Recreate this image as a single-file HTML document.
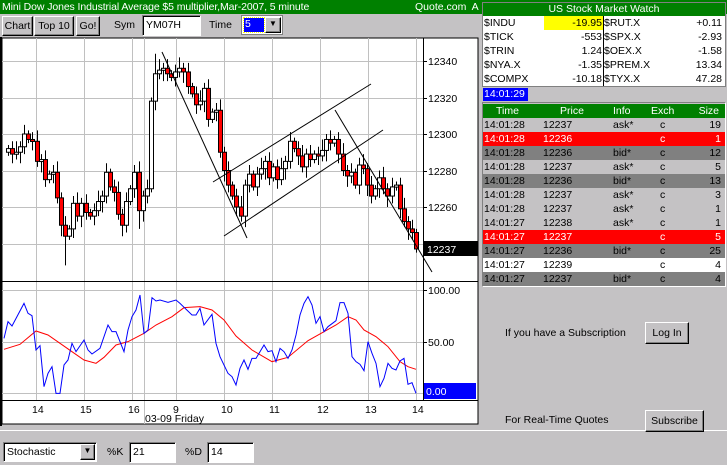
<!DOCTYPE html>
<html><head><meta charset="utf-8"><style>
*{margin:0;padding:0;box-sizing:border-box}
body{width:727px;height:465px;background:#c4c2c4;font-family:"Liberation Sans",sans-serif;font-size:10.5px;position:relative;overflow:hidden}
.a{position:absolute;white-space:nowrap}
.btn{position:absolute;background:#c4c2c4;border:1px solid;border-color:#fff #000 #000 #fff;box-shadow:inset -1px -1px #808080;text-align:center;font-size:10.5px;line-height:18px}
.inp{position:absolute;background:#fff;border:1px solid;border-color:#808080 #fff #fff #808080;box-shadow:inset 1px 1px #000;padding-left:3px;font-size:10.5px;line-height:18px}
.row{position:absolute;left:483px;width:242px;height:14px;line-height:14px;font-size:10.5px}
.row span{position:absolute}
</style></head><body>
<div class="a" style="left:0;top:0;width:727px;height:14px;background:#008000"></div>
<div class="a" style="left:2px;top:0;color:#fff;font-size:10.5px;line-height:14px;letter-spacing:-0.1px">Mini Dow Jones Industrial Average $5 multiplier,Mar-2007, 5 minute</div>
<div class="a" style="left:415px;top:0;color:#fff;font-size:10.5px;line-height:14px">Quote.com&nbsp; A</div>

<div class="btn" style="left:2px;top:16px;width:31px;height:20px">Chart</div>
<div class="btn" style="left:34px;top:16px;width:40px;height:20px">Top 10</div>
<div class="btn" style="left:76px;top:16px;width:24px;height:20px">Go!</div>
<div class="a" style="left:114px;top:19px">Sym</div>
<div class="inp" style="left:142px;top:15px;width:59px;height:21px">YM07H</div>
<div class="a" style="left:209px;top:19px">Time</div>
<div class="a" style="left:241px;top:15px;width:42px;height:20px;background:#fff;border:1px solid #808080"></div>
<div class="a" style="left:244px;top:18px;width:20px;height:14px;background:#0000ff;outline:1px dotted #ff0;color:#fff;line-height:13px;padding-left:1px">5</div>
<div class="btn" style="left:265px;top:17px;width:16px;height:16px;line-height:12px;font-size:8px">▼</div>

<svg class="a" style="left:0;top:37px" width="480" height="390" viewBox="0 37 480 390">
<rect x="2" y="38" width="476" height="386" fill="#fff" stroke="#000"/>
<line x1="1" y1="37" x2="1" y2="426" stroke="#000" stroke-width="2"/>
<g stroke="#c0c0c0" stroke-width="1">
<line x1="36.5" y1="38" x2="36.5" y2="400"/><line x1="84.5" y1="38" x2="84.5" y2="400"/><line x1="132.5" y1="38" x2="132.5" y2="400"/><line x1="144.5" y1="38" x2="144.5" y2="424"/><line x1="176.5" y1="38" x2="176.5" y2="400"/><line x1="224.5" y1="38" x2="224.5" y2="400"/><line x1="272.5" y1="38" x2="272.5" y2="400"/><line x1="320.5" y1="38" x2="320.5" y2="400"/><line x1="368.5" y1="38" x2="368.5" y2="400"/><line x1="416.5" y1="38" x2="416.5" y2="400"/>
<line x1="2" y1="61.5" x2="423" y2="61.5"/><line x1="2" y1="98.5" x2="423" y2="98.5"/><line x1="2" y1="134.5" x2="423" y2="134.5"/><line x1="2" y1="171.5" x2="423" y2="171.5"/><line x1="2" y1="207.5" x2="423" y2="207.5"/><line x1="2" y1="244.5" x2="423" y2="244.5"/>
<line x1="2" y1="290.5" x2="423" y2="290.5"/><line x1="2" y1="342.5" x2="423" y2="342.5"/><line x1="2" y1="393.5" x2="423" y2="393.5"/>
</g>
<line x1="423.5" y1="38" x2="423.5" y2="400" stroke="#000"/>
<line x1="2" y1="281.5" x2="478" y2="281.5" stroke="#000"/>
<line x1="2" y1="400.5" x2="478" y2="400.5" stroke="#000"/>
<g id="cd"></g>
<g stroke="#000" stroke-width="1" fill="none">
<line x1="162" y1="52" x2="247" y2="238"/>
<line x1="213" y1="182" x2="371" y2="84"/>
<line x1="224" y1="236" x2="383" y2="130"/>
<line x1="335" y1="110" x2="432" y2="272"/>
</g>
<g transform="translate(0,250) scale(0.33333)" fill="none" stroke-width="3">
<polyline stroke="#ff0000" points="12,298 60,283 108,243 144,255 180,280 216,305 252,330 288,340 312,322 348,285 384,275 432,250 468,225 516,200 552,173 600,170 636,180 672,210 708,258 756,300 816,335 864,322 924,272 972,245 1008,225 1044,200 1068,210 1092,240 1128,260 1164,290 1200,335 1224,350 1248,358"/>
<polyline stroke="#0000ff" points="12,265 24,215 36,228 72,160 84,190 96,197 108,300 120,287 132,410 144,370 156,350 168,430 180,430 192,345 204,330 216,280 228,305 252,270 264,300 276,312 300,295 324,225 336,245 348,245 372,305 384,240 396,200 408,180 420,135 432,250 444,240 456,143 468,153 480,150 504,157 528,150 540,160 576,195 588,195 600,175 612,225 636,193 648,280 660,320 684,370 696,380 708,405 720,355 732,330 744,358 756,325 768,325 792,285 804,305 816,302 828,335 840,295 852,305 864,325 876,300 888,255 900,195 912,160 924,140 936,165 948,220 960,200 972,245 984,230 1008,212 1020,158 1032,158 1044,190 1056,320 1068,335 1080,343 1092,362 1104,275 1116,310 1128,340 1140,410 1152,385 1164,340 1176,355 1188,360 1200,333 1212,325 1224,403 1236,398 1248,430"/>
</g>
<g stroke="#000"><line x1="423" y1="61.5" x2="427" y2="61.5"/><line x1="423" y1="98.5" x2="427" y2="98.5"/><line x1="423" y1="134.5" x2="427" y2="134.5"/><line x1="423" y1="171.5" x2="427" y2="171.5"/><line x1="423" y1="207.5" x2="427" y2="207.5"/><line x1="423" y1="290.5" x2="427" y2="290.5"/><line x1="423" y1="342.5" x2="427" y2="342.5"/></g>
<g font-family="Liberation Sans" font-size="10.5" fill="#000">
<text x="428" y="65">12340</text><text x="428" y="102">12320</text><text x="428" y="138">12300</text><text x="428" y="175">12280</text><text x="428" y="211">12260</text>
<text x="428" y="294">100.00</text><text x="428" y="346">50.00</text>
<text x="32" y="413">14</text><text x="80" y="413">15</text><text x="128" y="413">16</text><text x="173" y="413">9</text><text x="221" y="413">10</text><text x="269" y="413">11</text><text x="317" y="413">12</text><text x="365" y="413">13</text><text x="412" y="413">14</text>
<text x="145" y="422">03-09 Friday</text>
</g>
<rect x="424" y="241" width="54" height="15" fill="#000"/><text x="427" y="253" fill="#fff" font-family="Liberation Sans" font-size="10.5">12237</text>
<rect x="424" y="383" width="52" height="16" fill="#0000ff"/><text x="426" y="395" fill="#fff" font-family="Liberation Sans" font-size="10.5">0.00</text>
</svg>
<div class="a" style="left:0;top:430px;width:727px;height:1px;background:#fff"></div>

<div class="inp" style="left:3px;top:442px;width:94px;height:20px">Stochastic</div>
<div class="btn" style="left:80px;top:444px;width:15px;height:16px;line-height:12px;font-size:8px">▼</div>
<div class="a" style="left:107px;top:446px">%K</div>
<div class="inp" style="left:129px;top:442px;width:47px;height:21px">21</div>
<div class="a" style="left:185px;top:446px">%D</div>
<div class="inp" style="left:207px;top:442px;width:47px;height:21px">14</div>

<div class="a" style="left:482px;top:2px;width:244px;height:85px;background:#fff;border:1px solid #808080"></div>
<div class="a" style="left:483px;top:3px;width:242px;height:13px;background:#008000;color:#fff;text-align:center;line-height:13px">US Stock Market Watch</div>
<div class="a" style="left:544px;top:16px;width:59px;height:14px;background:#ff0"></div>
<div class="a" style="left:603px;top:16px;width:1px;height:70px;background:#000"></div>
<div class="a" style="left:484px;top:16px;line-height:14px">$INDU<br>$TICK<br>$TRIN<br>$NYA.X<br>$COMPX</div>
<div class="a" style="left:540px;top:16px;width:62px;text-align:right;line-height:14px">-19.95<br>-553<br>1.24<br>-1.35<br>-10.18</div>
<div class="a" style="left:604px;top:16px;line-height:14px">$RUT.X<br>$SPX.X<br>$OEX.X<br>$PREM.X<br>$TYX.X</div>
<div class="a" style="left:660px;top:16px;width:62px;text-align:right;line-height:14px">+0.11<br>-2.93<br>-1.58<br>13.34<br>47.28</div>
<div class="a" style="left:483px;top:88px;width:45px;height:13px;background:#0000ff;color:#fff;line-height:13px;padding-left:1px">14:01:29</div>

<div class="a" style="left:482px;top:102px;width:244px;height:185px;border:1px solid #808080;border-right-color:#fff;border-bottom-color:#fff;background:#c4c2c4"></div>
<div class="row" style="top:104px;background:#008000;color:#fff"><span style="left:13px">Time</span><span style="left:77px">Price</span><span style="left:130px">Info</span><span style="left:168px">Exch</span><span style="right:6px">Size</span></div>
<div id="rows"></div>

<div class="a" style="left:505px;top:327px">If you have a Subscription</div>
<div class="btn" style="left:645px;top:322px;width:44px;height:22px;line-height:20px">Log In</div>
<div class="a" style="left:505px;top:414px">For Real-Time Quotes</div>
<div class="btn" style="left:645px;top:410px;width:59px;height:22px;line-height:20px">Subscribe</div>

<script>
var R=[["#c4c2c4","#000","14:01:28","12237","ask*","19"],["#ff0000","#fff","14:01:28","12236","","1"],["#808080","#000","14:01:28","12236","bid*","12"],["#c4c2c4","#000","14:01:28","12237","ask*","5"],["#808080","#000","14:01:28","12236","bid*","13"],["#c4c2c4","#000","14:01:28","12237","ask*","3"],["#c4c2c4","#000","14:01:28","12237","ask*","1"],["#c4c2c4","#000","14:01:27","12238","ask*","1"],["#ff0000","#fff","14:01:27","12237","","5"],["#808080","#000","14:01:27","12236","bid*","25"],["#fff","#000","14:01:27","12239","","4"],["#808080","#000","14:01:27","12237","bid*","4"]];
var h="";R.forEach(function(r,i){h+='<div class="row" style="top:'+(118+i*14)+'px;background:'+r[0]+';color:'+r[1]+'"><span style="left:1px">'+r[2]+'</span><span style="left:60px">'+r[3]+'</span><span style="left:130px">'+r[4]+'</span><span style="left:177px">c</span><span style="right:4px">'+r[5]+'</span></div>'});
document.getElementById("rows").innerHTML=h;
var C=[12292,12289,12290,12293,12300,12297,12296,12285,12286,12275,12278,12279,12265,12250,12244,12248,12262,12255,12262,12257,12255,12258,12263,12266,12279,12271,12268,12256,12250,12263,12270,12279,12258,12266,12270,12318,12333,12335,12336,12333,12331,12334,12336,12334,12326,12322,12316,12318,12325,12308,12312,12313,12290,12280,12272,12266,12260,12255,12272,12278,12271,12278,12281,12285,12276,12282,12275,12281,12285,12296,12292,12288,12282,12289,12286,12289,12288,12291,12297,12295,12297,12289,12280,12277,12279,12272,12283,12281,12272,12266,12270,12276,12270,12266,12271,12272,12259,12252,12248,12246,12237];
var LW={14:12228,47:12320,35:12270,96:12248,125:12300};
function Y(p){return 61+(12340-p)*1.825}
var s="",o=12290;
C.forEach(function(c,i){var x=Math.round(8+4.08*i);var hi=Math.max(o,c)+2+(i*7%5),lo=Math.min(o,c)-2-(i*3%5);
if(i==14)lo=12228;if(i==32)lo=12248;if(i==36)hi=12344;
s+='<line x1="'+(x+.5)+'" y1="'+Y(hi)+'" x2="'+(x+.5)+'" y2="'+Y(lo)+'" stroke="#000"/>';
var t=Y(Math.max(o,c)),b=Y(Math.min(o,c));if(b-t<2)b=t+2;
s+='<rect x="'+(x-1.5)+'" y="'+t+'" width="4" height="'+(b-t)+'" fill="'+(c<o?"#ff0000":"#fff")+'" stroke="#000"/>';o=c;});
document.getElementById("cd").innerHTML=s;
</script>
</body></html>
